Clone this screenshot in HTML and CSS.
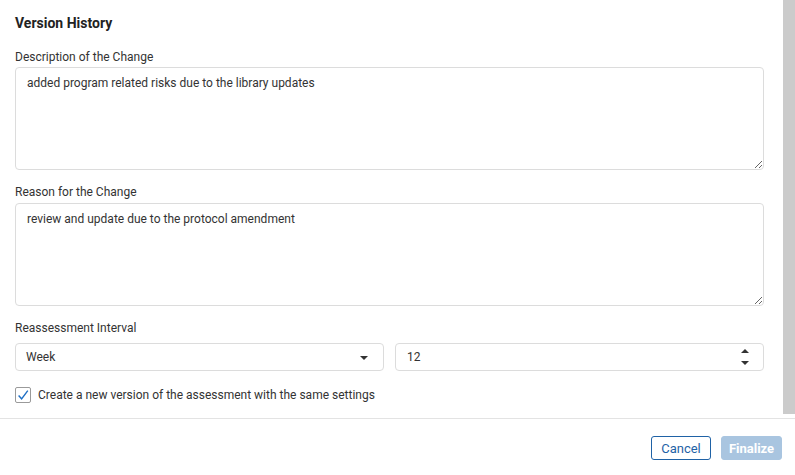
FILE: index.html
```html
<!DOCTYPE html>
<html lang="en">
<head>
<meta charset="utf-8">
<title>Version History</title>
<link rel="stylesheet" href="styles.css">
</head>
<body>
<div class="dialog">
  <div class="body-row">
    <div class="content">
      <h2 class="title">Version History</h2>
      <div class="field">
        <label class="label">Description of the Change</label>
        <textarea class="area" readonly>added program related risks due to the library updates</textarea>
      </div>
      <div class="field">
        <label class="label">Reason for the Change</label>
        <textarea class="area" readonly>review and update due to the protocol amendment</textarea>
      </div>
      <div class="field">
        <label class="label">Reassessment Interval</label>
        <div class="interval">
          <div class="control select">
            <span>Week</span>
            <span class="caret"></span>
          </div>
          <div class="control number">
            <span>12</span>
            <svg class="spin" width="8" height="18" viewBox="0 0 8 18">
              <path d="M0 5 L4 1 L8 5 Z" fill="#333"/>
              <path d="M0 13 L4 17 L8 13 Z" fill="#333"/>
            </svg>
          </div>
        </div>
      </div>
      <div class="check-row">
        <span class="checkbox">
          <svg width="14" height="14" viewBox="0 0 14 14">
            <path d="M2.6 7.6 L5.6 10.8 L11.8 2.6" fill="none" stroke="#1f6fc5" stroke-width="1.4"/>
          </svg>
        </span>
        <span class="check-label">Create a new version of the assessment with the same settings</span>
      </div>
    </div>
    <div class="scrollbar"><div class="thumb"></div></div>
  </div>
  <div class="footer">
    <button class="btn btn-cancel">Cancel</button>
    <button class="btn btn-primary">Finalize</button>
  </div>
</div>
</body>
</html>
```

FILE: styles.css
```css
html, body {
  margin: 0;
  padding: 0;
  background: #fff;
}
body {
  font-family: Roboto, "Liberation Sans", Arial, sans-serif;
  color: #333;
  font-size: 12px;
}
.dialog {
  width: 795px;
  height: 475px;
  display: flex;
  flex-direction: column;
}
.body-row {
  display: flex;
  height: 418px;
}
.content {
  flex: 1;
  padding: 13px 19px 0 15px;
}
.scrollbar {
  width: 12px;
  height: 418px;
  background: #fff;
}
.thumb {
  height: 414px;
  background: #cbcbcb;
}
.title {
  margin: 0 0 15px 0;
  font-size: 14px;
  line-height: 21px;
  font-weight: 700;
  color: #222;
}
.field {
  margin-bottom: 14px;
}
.label {
  display: block;
  font-size: 12px;
  line-height: 16px;
  margin-bottom: 2px;
  color: #333;
}
.field + .field .label {
  margin-bottom: 3px;
}
.area {
  display: block;
  box-sizing: border-box;
  width: 100%;
  height: 103px;
  margin: 0;
  padding: 7px 11px;
  border: 1px solid #dcdcdc;
  border-radius: 4px;
  font-family: Roboto, "Liberation Sans", Arial, sans-serif;
  font-size: 12px;
  line-height: 16px;
  color: #333;
  resize: vertical;
  outline: none;
  background: #fff;
}
.interval {
  display: flex;
  gap: 11px;
  margin-top: 7px;
}
.control {
  flex: 1;
  box-sizing: border-box;
  height: 28px;
  border: 1px solid #dcdcdc;
  border-radius: 4px;
  display: flex;
  align-items: center;
  justify-content: space-between;
  padding: 0 15px 0 10px;
  font-size: 12px;
  color: #333;
}
.number {
  padding-left: 11px;
  padding-right: 14px;
}
.caret {
  width: 0;
  height: 0;
  border-left: 4px solid transparent;
  border-right: 4px solid transparent;
  border-top: 4px solid #333;
  margin-top: 2px;
}
.spin {
  display: block;
}
.check-row {
  display: flex;
  align-items: center;
  gap: 7px;
  margin-top: 16px;
}
.checkbox {
  box-sizing: border-box;
  width: 16px;
  height: 16px;
  border: 1px solid #9a9a9a;
  border-radius: 2px;
  display: flex;
  align-items: center;
  justify-content: center;
  background: #fff;
}
.checkbox svg {
  display: block;
}
.check-label {
  font-size: 12px;
  line-height: 16px;
  color: #333;
}
.footer {
  flex: 1;
  border-top: 1px solid #e3e3e3;
  display: flex;
  justify-content: flex-end;
  align-items: flex-start;
  gap: 10px;
  padding: 17px 13px 0 0;
}
.btn {
  box-sizing: border-box;
  height: 24px;
  border-radius: 3px;
  font-family: Roboto, "Liberation Sans", Arial, sans-serif;
  font-size: 13px;
  padding: 0;
  margin: 0;
}
.btn-cancel {
  width: 60px;
  background: #fff;
  border: 1px solid #1f62a6;
  color: #1f62a6;
}
.btn-primary {
  width: 61px;
  background: #a9c5e0;
  border: 1px solid #a9c5e0;
  color: #fff;
  font-weight: 700;
}
```
